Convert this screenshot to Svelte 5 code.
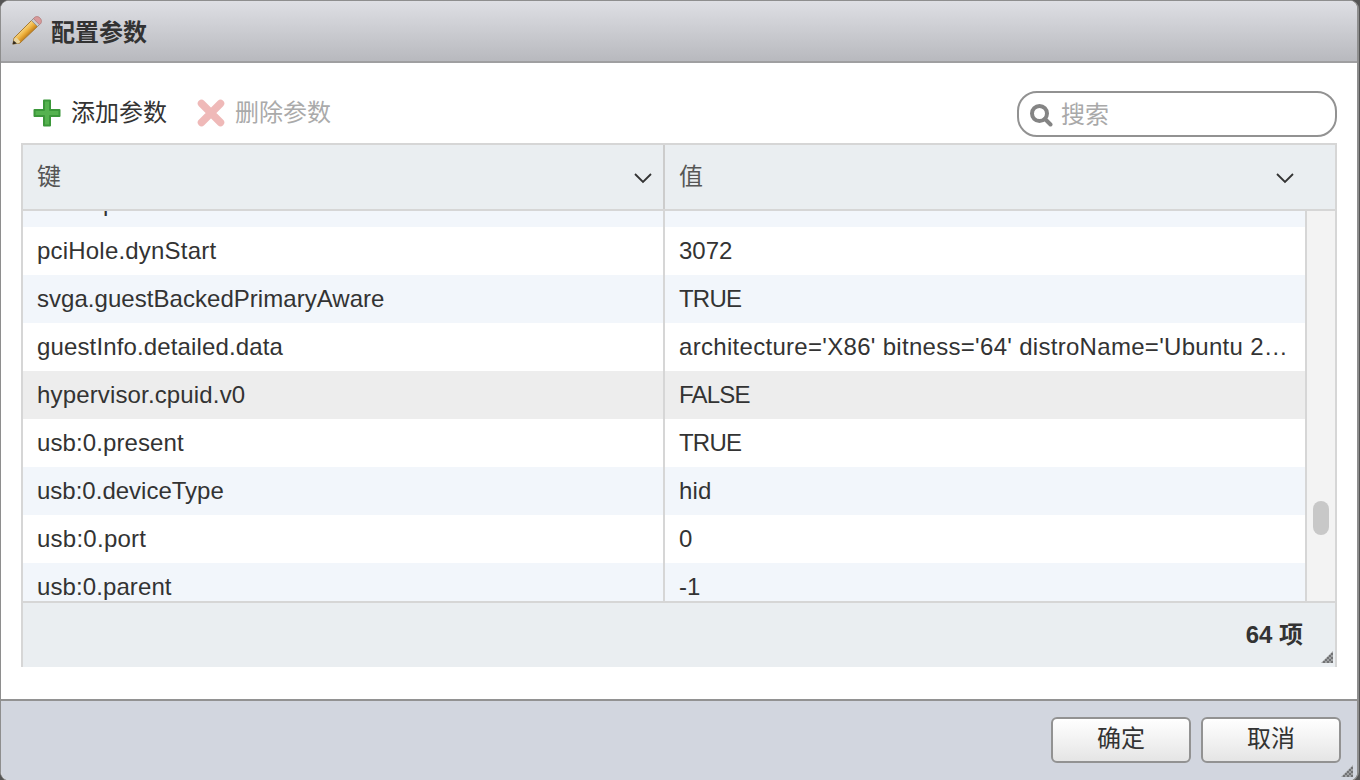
<script>
  const rows = [
    { key: 'usb:1.parent', value: '-1', keySpacing: 0.1, valueSpacing: 0 },
    { key: 'pciHole.dynStart', value: '3072', keySpacing: 0.2, valueSpacing: 0 },
    { key: 'svga.guestBackedPrimaryAware', value: 'TRUE', keySpacing: 0.04, valueSpacing: -0.8 },
    { key: 'guestInfo.detailed.data', value: "architecture='X86' bitness='64' distroName='Ubuntu 22.04.3 LTS'", keySpacing: 0.14, valueSpacing: 0.3 },
    { key: 'hypervisor.cpuid.v0', value: 'FALSE', keySpacing: 0.15, valueSpacing: -0.8 },
    { key: 'usb:0.present', value: 'TRUE', keySpacing: 0.1, valueSpacing: -0.8 },
    { key: 'usb:0.deviceType', value: 'hid', keySpacing: 0, valueSpacing: 0.2 },
    { key: 'usb:0.port', value: '0', keySpacing: 0.25, valueSpacing: 0 },
    { key: 'usb:0.parent', value: '-1', keySpacing: 0.1, valueSpacing: 0 }
  ];
  let selected = $state(4);
</script>

{#snippet chevron()}
  <svg class="chevron" width="20" height="12" viewBox="0 0 20 12" aria-hidden="true">
    <path d="M2 2l8 8 8-8" fill="none" stroke="#333" stroke-width="1.8" />
  </svg>
{/snippet}

{#snippet grip()}
  <svg class="grip" width="12" height="12" viewBox="0 0 12 12" aria-hidden="true">
    <path d="M12 0V12H0Z" fill="#a0a2a4" />
    <path d="M10 2h2v2h-2zM8 4h2v2h-2zM6 6h2v2H6zM10 6h2v2h-2zM4 8h2v2H4zM8 8h2v2H8zM2 10h2v2H2zM6 10h2v2H6zM10 10h2v2h-2z" fill="#727375" />
  </svg>
{/snippet}

<div class="screen">
  <div class="dialog">
    <header>
      <svg class="pencil" width="32" height="32" viewBox="0 0 32 32" aria-hidden="true">
        <defs>
          <linearGradient id="wood" x1="0" y1="0" x2="1" y2="1">
            <stop offset="0.36" stop-color="#f8dc91" />
            <stop offset="0.5" stop-color="#efb33f" />
            <stop offset="0.64" stop-color="#bc7410" />
          </linearGradient>
        </defs>
        <path d="M2 29l1-6L22 4l6 6L9 28z" fill="url(#wood)" stroke="#a77a32" />
        <path d="M3.200 23.500l2.500-.8 3.600 3.800-1 1.500L2 29.500z" fill="#e8d49f" />
        <path d="M1.500 29.500l1-4 3.500 3z" fill="#352d20" />
        <path d="M20.500 5.500L23 3l6 6-2.500 2.500z" fill="#c9cccd" stroke="#8b8c8c" stroke-width=".8" />
        <path d="M22.500 3.700C24 1 27 1 29 3S31 8 28.500 9.700z" fill="#d99a9a" stroke="#b07878" stroke-width=".8" />
      </svg>
      <h1>配置参数</h1>
    </header>

    <main>
      <div class="toolbar">
        <button class="tool add">
          <svg width="30" height="30" viewBox="0 0 30 30" aria-hidden="true">
            <path d="M12 2.500h6V12h9.500v6H18v9.500h-6V18H2.500v-6H12z" fill="#55b24f" stroke="#3b973a" stroke-width="2" stroke-linejoin="round" />
          </svg>
          <span>添加参数</span>
        </button>
        <button class="tool remove" disabled>
          <svg width="30" height="30" viewBox="0 0 30 30" aria-hidden="true">
            <path d="M5.500 5.500l19 19M24.500 5.500l-19 19" stroke="#efb9b8" stroke-width="7.500" stroke-linecap="round" />
          </svg>
          <span>删除参数</span>
        </button>
        <label class="search">
          <svg width="24" height="24" viewBox="0 0 24 24" aria-hidden="true">
            <circle cx="10.500" cy="10.500" r="7.500" fill="none" stroke="#848484" stroke-width="4" />
            <path d="M16 16l5.500 5.500" stroke="#848484" stroke-width="4" stroke-linecap="round" />
          </svg>
          <input type="text" placeholder="搜索" />
        </label>
      </div>

      <div class="grid">
        <div class="head">
          <div class="th first"><span>键</span>{@render chevron()}</div>
          <div class="th last"><span>值</span>{@render chevron()}</div>
        </div>
        <div class="body">
          <div class="viewport">
            <div class="rows">
              {#each rows as row, i}
                <div class="row" class:alt={i % 2 === 0} class:selected={i === selected}>
                  <div class="cell key" style:letter-spacing="{row.keySpacing}px">{row.key}</div>
                  <div class="cell" style:letter-spacing="{row.valueSpacing}px">{row.value}</div>
                </div>
              {/each}
            </div>
          </div>
          <div class="scroll"><div class="thumb"></div></div>
        </div>
        <div class="foot"><span>64 项</span>{@render grip()}</div>
      </div>
    </main>

    <footer>
      <button class="action">确定</button>
      <button class="action">取消</button>
      {@render grip()}
    </footer>
  </div>
</div>

<style>
  :global(body) { overflow: hidden; }
  .screen, .screen * { box-sizing: border-box; }
  .screen {
    width: 1360px;
    height: 780px;
    overflow: hidden;
    background: #555;
    font: 24px/48px "Liberation Sans", "Noto Sans CJK SC", sans-serif;
    color: #333;
  }
  button, input { font: inherit; color: inherit; }
  .dialog {
    width: 1359px;
    height: 781px;
    display: flex;
    flex-direction: column;
    overflow: hidden;
    border: 1px solid #8e8e8e;
    border-right-width: 2px;
    border-radius: 9px;
    background: #fff;
  }
  header {
    flex: none;
    height: 62px;
    display: flex;
    align-items: center;
    gap: 8px;
    padding-left: 10px;
    border-bottom: 2px solid #9f9fa1;
    background: linear-gradient(#dedfe4, #b8b9be);
  }
  h1 { margin: 0; padding-top: 4px; font-size: 24px; font-weight: 700; }
  main { flex: none; height: 636px; padding: 24px 20px 0; }
  .toolbar { height: 56px; display: flex; align-items: flex-start; }
  .tool {
    display: flex;
    align-items: center;
    gap: 9px;
    height: 48px;
    padding: 4px 0 0;
    border: 0;
    background: none;
    line-height: 44px;
  }
  .add { margin-left: 11px; }
  .remove { margin-left: 29px; color: #aaa; }
  .tool svg { display: block; }
  .search {
    margin: 4px 0 0 auto;
    width: 320px;
    height: 46px;
    display: flex;
    align-items: center;
    gap: 8px;
    padding: 2px 10px 0;
    border: 2px solid #929292;
    border-radius: 20px;
    background: #fff;
  }
  .search input { flex: 1; min-width: 0; height: 40px; padding: 0; border: 0; outline: 0; background: none; }
  .search input::placeholder { color: #a9a9a9; opacity: 1; }
  .grid { border: 2px solid #d6d6d6; border-bottom: 0; height: 524px; }
  .head { height: 66px; display: flex; border-bottom: 2px solid #d6d6d6; background: #eaeef1; color: #565656; }
  .th { display: flex; align-items: center; justify-content: space-between; padding-left: 14px; }
  .th.first { width: 642px; padding-right: 10px; border-right: 2px solid #ccc; }
  .th.last { flex: 1; padding-right: 40px; }
  .chevron { margin-top: 2px; }
  .body { height: 390px; display: flex; }
  .viewport { flex: 1; min-width: 0; overflow: hidden; }
  .rows { margin-top: -32px; }
  .row { display: flex; height: 48px; background: #fff; }
  .row.alt { background: #f2f6fb; }
  .row.selected { background: #ededed; }
  .cell { flex: 1; min-width: 0; padding: 0 14px; overflow: hidden; white-space: nowrap; text-overflow: ellipsis; }
  .cell.key { flex: none; width: 642px; border-right: 2px solid #d6d6d6; }
  .scroll { width: 30px; padding: 290px 0 0 6px; border-left: 2px solid #d6d6d6; background: #f3f3f3; }
  .thumb { width: 16px; height: 34px; border-radius: 8px; background: #c8c8c8; }
  .foot {
    height: 66px;
    display: flex;
    align-items: center;
    justify-content: flex-end;
    gap: 18px;
    padding-right: 2px;
    border-top: 2px solid #d6d6d6;
    background: #eaeef1;
    font-weight: 700;
  }
  .grip { flex: none; align-self: flex-end; }
  .foot .grip { margin-bottom: 4px; }
  footer {
    flex: 1;
    display: flex;
    align-items: flex-start;
    justify-content: flex-end;
    gap: 10px;
    padding: 16px 4px 0 0;
    border-top: 2px solid #929292;
    background: #d2d6df;
  }
  .action {
    width: 140px;
    height: 46px;
    padding: 0 0 2px;
    border: 2px solid #929292;
    border-radius: 6px;
    background: linear-gradient(#fff, #e5e5e5);
    line-height: 40px;
  }
  footer .grip { margin: 0 0 3px -10px; }
</style>
